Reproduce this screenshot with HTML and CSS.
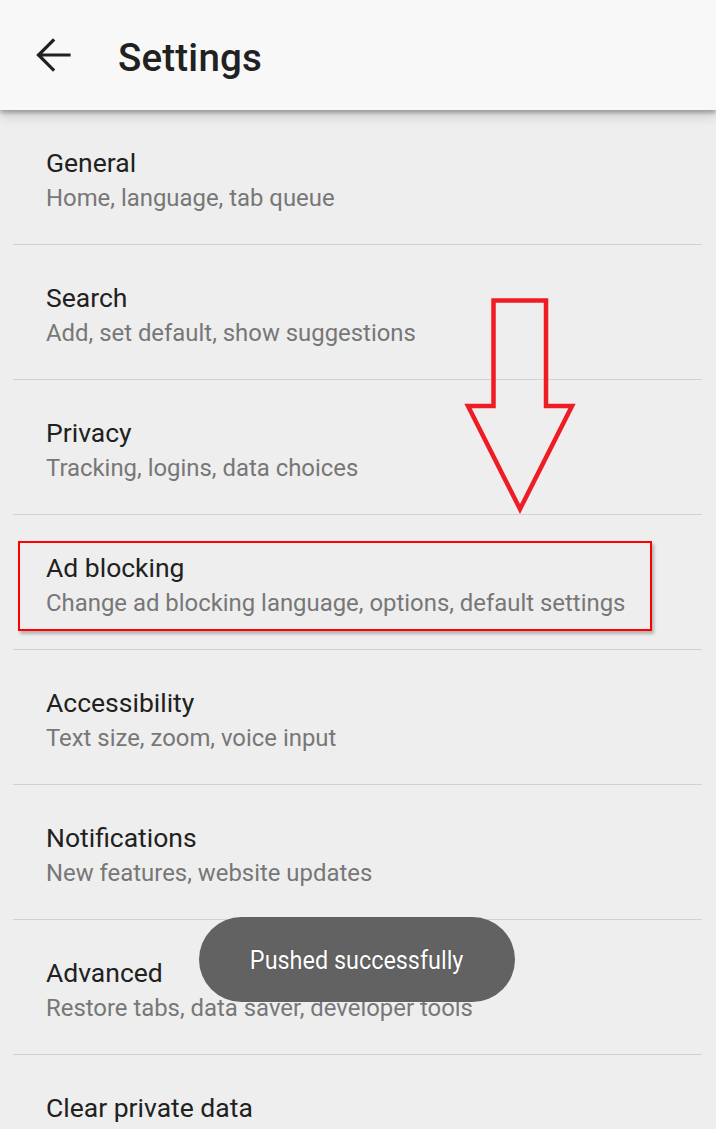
FILE: index.html
```html
<!DOCTYPE html>
<html lang="en">
<head>
    <meta charset="UTF-8">
    <meta name="viewport" content="width=device-width, initial-scale=1.0">
    <title>Settings</title>
    <link rel="stylesheet" href="styles.css">
</head>
<body>
    <header class="toolbar">
        <button class="back-btn" aria-label="Back">
            <svg width="48" height="48" viewBox="0 0 48 48">
                <path d="M40 24H10M24 9.5L9.5 24 24 38.5" fill="none" stroke="#212121" stroke-width="3.2" stroke-linecap="square"/>
            </svg>
        </button>
        <h1>Settings</h1>
    </header>

    <ul class="prefs">
        <li class="pref">
            <div class="pref-title">General</div>
            <div class="pref-summary">Home, language, tab queue</div>
        </li>
        <li class="pref">
            <div class="pref-title">Search</div>
            <div class="pref-summary">Add, set default, show suggestions</div>
        </li>
        <li class="pref">
            <div class="pref-title">Privacy</div>
            <div class="pref-summary">Tracking, logins, data choices</div>
        </li>
        <li class="pref">
            <div class="highlight"></div>
            <div class="pref-title">Ad blocking</div>
            <div class="pref-summary">Change ad blocking language, options, default settings</div>
        </li>
        <li class="pref">
            <div class="pref-title">Accessibility</div>
            <div class="pref-summary">Text size, zoom, voice input</div>
        </li>
        <li class="pref">
            <div class="pref-title">Notifications</div>
            <div class="pref-summary">New features, website updates</div>
        </li>
        <li class="pref">
            <div class="pref-title">Advanced</div>
            <div class="pref-summary">Restore tabs, data saver, developer tools</div>
        </li>
        <li class="pref pref-last">
            <div class="pref-title">Clear private data</div>
        </li>
    </ul>

    <!-- annotation arrow pointing at the ad blocking row -->
    <svg class="pointer" width="716" height="1129" viewBox="0 0 716 1129">
        <polygon points="493.5,300.5 546,300.5 546,406 572,406 520,509 468,406 493.5,406"
                 fill="none" stroke="#ee1c24" stroke-width="4.5" stroke-linejoin="miter"/>
    </svg>

    <div class="toast"><span>Pushed successfully</span></div>
</body>
</html>
```

FILE: styles.css
```css
* {
    margin: 0;
    padding: 0;
    box-sizing: border-box;
}

html, body {
    height: 1129px;
    overflow: hidden;
}

body {
    font-family: Roboto, 'Noto Sans', sans-serif;
    background: #eeeeee;
    color: #212121;
    position: relative;
}

.toolbar {
    position: relative;
    z-index: 2;
    height: 110px;
    background: #f8f8f8;
    display: flex;
    align-items: center;
    padding-left: 29px;
    box-shadow: 0 3px 4px rgba(0, 0, 0, 0.28), 0 8px 10px rgba(0, 0, 0, 0.1);
}

.back-btn {
    width: 48px;
    height: 48px;
    border: none;
    background: none;
    display: flex;
    margin-top: -1px;
}

.toolbar h1 {
    font-size: 38.5px;
    font-weight: 500;
    margin-left: 41px;
    margin-top: 4px;
    letter-spacing: 0.2px;
}

.prefs {
    list-style: none;
}

.pref {
    position: relative;
    height: 135px;
    padding: 36px 0 0 46px;
}

.pref::after {
    content: '';
    position: absolute;
    left: 13px;
    right: 14px;
    bottom: 0;
    height: 1px;
    background: #d2d2d2;
}

.pref-last {
    height: auto;
}

.pref-last::after {
    display: none;
}

.pref-title {
    font-size: 26.5px;
    line-height: 34px;
    color: #212121;
}

.pref-summary {
    font-size: 23.9px;
    line-height: 34px;
    color: #777777;
    margin-top: 1px;
}

.highlight {
    position: absolute;
    top: 26px;
    left: 18px;
    width: 634px;
    height: 90px;
    border: 2px solid #ff0000;
    box-shadow: 2px 3px 3px rgba(0, 0, 0, 0.25);
}

.pointer {
    position: absolute;
    top: 0;
    left: 0;
    pointer-events: none;
}

.toast {
    position: absolute;
    top: 917px;
    left: 199px;
    width: 316px;
    height: 85px;
    border-radius: 43px;
    background: #626262;
    color: #ffffff;
    display: flex;
    align-items: center;
    justify-content: center;
    font-size: 26px;
}

.toast span {
    display: inline-block;
    transform: scaleX(0.9);
    text-shadow: 0 0 1px rgba(0, 0, 0, 0.4);
}
```
